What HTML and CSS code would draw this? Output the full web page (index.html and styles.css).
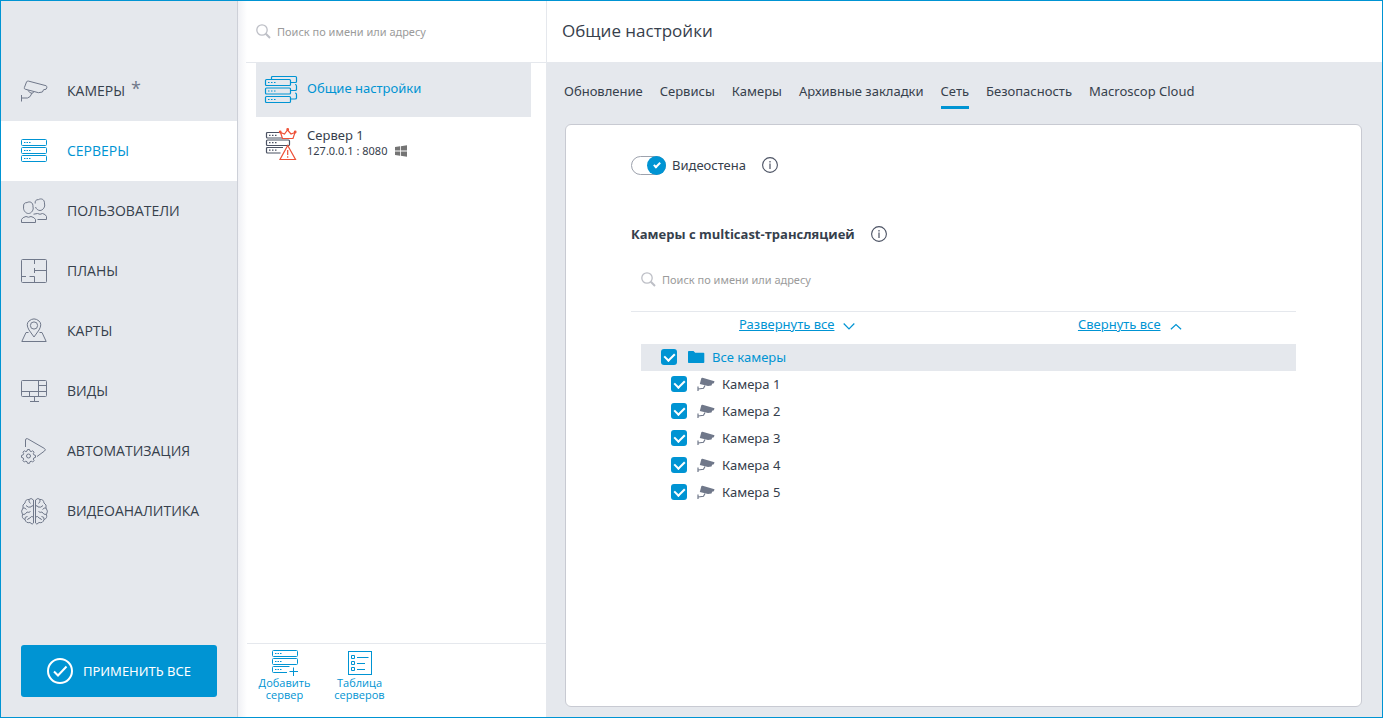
FILE: index.html
```html
<!DOCTYPE html>
<html lang="ru">
<head>
<meta charset="utf-8">
<title>Общие настройки</title>
<link rel="stylesheet" href="styles.css">
</head>
<body>
<svg class="defs" aria-hidden="true">
  <symbol id="search" viewBox="0 0 15 15"><circle cx="6" cy="6" r="5.2" fill="none" stroke="currentColor" stroke-width="1.3"/><path d="M9.8 9.8L14 14" stroke="currentColor" stroke-width="2"/></symbol>
  <symbol id="info" viewBox="0 0 16 16"><circle cx="8" cy="8" r="7.4" fill="none" stroke="currentColor" stroke-width="1.1"/><path d="M8 6.5V12M8 4V5.4" stroke="currentColor" stroke-width="1.2"/></symbol>
  <symbol id="cam" viewBox="0 0 18 14"><path d="M4.300 1.200Q4.600 .6 5.500 .8L17.500 4.200L16.900 6.300L15.100 6.800L14.500 8.600L11 9L2.800 7Z" fill="currentColor"/><path d="M8 8.500L6.500 11.300L1.200 12M1 9.500V14" fill="none" stroke="currentColor" stroke-width="1.2"/></symbol>
</svg>
<div class="window">
  <aside class="sidebar">
    <nav class="nav">
      <a class="nav-item" href="#"><svg class="nav-icon" viewBox="0 0 28 28"><path d="M5.500 5Q6 3.700 7.500 4.100L25 8.700Q26.200 9.200 25.800 10.800L25 12.300L22.600 12.700L21.400 15L17.500 15.700L4.200 12.200Q2.800 11.700 3.400 10.500ZM7 13.300Q8.500 16.300 11 16.300L13 14.800M11 16Q9.500 20.500 6.500 21H.5M.5 18V24.500" /></svg><span>КАМЕРЫ</span><span class="star">*</span></a>
      <a class="nav-item active" href="#"><svg class="nav-icon" viewBox="0 0 28 28"><rect x=".5" y="2.500" width="25" height="6" rx="1"/><rect x=".5" y="10.500" width="25" height="6" rx="1"/><rect x=".5" y="18.500" width="25" height="6" rx="1"/><path d="M3 5.500h1.500m1 0h1.500m1 0h1.500M3 13.500h1.500m1 0h1.500m1 0h1.500M3 21.500h1.500m1 0h1.500m1 0h1.500"/></svg><span>СЕРВЕРЫ</span></a>
      <a class="nav-item" href="#"><svg class="nav-icon" viewBox="0 0 28 28"><path d="M2.600 10C2.200 7 3.500 5.500 6 5.600C8 4.300 12.300 4.500 12 10C13 12.500 10.500 16.500 7.500 16.500S2 13 2.600 10ZM.5 25.500V22.500Q1.500 20.300 5 19.500Q7.500 21 10 19.500Q13.500 20.300 14.500 22.500V25.500ZM14.200 6.500C13.800 4 15 2.500 17.500 2.600C19.500 1.300 23.800 1.500 23.500 7C24.500 9.500 22 13.500 19 13.500C17 13.500 15.300 12 14.500 10M12.500 17.200L16.500 16.500Q19 18 21.500 16.500Q24.700 17.200 25.500 19.500V22.500H16.500"/></svg><span>ПОЛЬЗОВАТЕЛИ</span></a>
      <a class="nav-item" href="#"><svg class="nav-icon" viewBox="0 0 28 28"><rect x=".5" y="2.500" width="25" height="23" rx="1"/><path d="M13.500 2.500V7M13.500 11V16M13.500 13.500H25.500M.5 19.500H5M8.500 19.500H13.500V25.500"/></svg><span>ПЛАНЫ</span></a>
      <a class="nav-item" href="#"><svg class="nav-icon" viewBox="0 0 28 28"><path d="M13 20L8 13Q4.500 7 8 4Q13-.2 18 4Q21.500 7 18 13ZM7.500 15.500H5L.8 24.500H25.200L21 15.500H18.500"/><circle cx="13" cy="8.500" r="3.600"/></svg><span>КАРТЫ</span></a>
      <a class="nav-item" href="#"><svg class="nav-icon" viewBox="0 0 28 28"><rect x=".5" y="3.500" width="25" height="16" rx="1"/><path d="M.5 14.500H25.500M17.500 3.500V19.500M17.500 8.500H25.500M8.500 14.500V19.500M13.500 19.500V24.500M9 24.500H18"/></svg><span>ВИДЫ</span></a>
      <a class="nav-item" href="#"><svg class="nav-icon" viewBox="0 0 28 28"><path d="M4.500 10V3Q4.600 1.200 6.500 1.700L23.500 11.500Q25.200 12.800 23.500 14L16 19.500"/><circle cx="7.500" cy="19" r="2"/><path d="M6.500 12.500h2l.5 1.600 1.200.5 1.500-.8 1.400 1.400-.8 1.500.6 1.200 1.600.5v2l-1.600.5-.6 1.200.8 1.500-1.400 1.400-1.500-.8-1.200.5-.5 1.600h-2l-.5-1.600-1.200-.5-1.500.8-1.400-1.400.8-1.500-.6-1.200-1.600-.5v-2l1.600-.5.6-1.200-.8-1.500 1.400-1.400 1.500.8 1.200-.5z"/></svg><span>АВТОМАТИЗАЦИЯ</span></a>
      <a class="nav-item" href="#"><svg class="nav-icon" viewBox="0 0 28 28"><g id="half"><path d="M12.500 3V26M12.500 3Q10 .2 8 2.500Q4.500 2 4 6Q1 7.500 2 11Q-.6 14 1.500 17.500Q.5 21.500 4 22.500Q5 26.500 9 25.500Q11.500 28.500 12.500 26M8 2.500Q7.500 5 9.500 6.500M12.500 9Q10.500 8 10 10Q7 11 5 8.500M2 11Q4 10.500 5.500 12.500M1.500 17.500Q4.500 18 6 15Q8 16 9.500 14.500M4 22.500Q3.500 19.500 6.500 19.500M12.500 20Q10 18.500 9 21Q6.500 21.500 6.500 23"/></g><use href="#half" transform="matrix(-1 0 0 1 27 0)"/></svg><span>ВИДЕОАНАЛИТИКА</span></a>
    </nav>
    <button class="apply" type="button"><svg class="apply-icon" viewBox="0 0 26 26"><circle cx="13" cy="13" r="12"/><path d="M7 13.500L11 17.500L19.500 8.500"/></svg>ПРИМЕНИТЬ ВСЕ</button>
  </aside>

  <section class="list">
    <label class="search list-search"><svg class="search-icon"><use href="#search"/></svg><input type="text" placeholder="Поиск по имени или адресу" aria-label="Поиск серверов"></label>
    <div class="servers">
      <a class="server selected" href="#">
        <svg class="server-icon" viewBox="0 0 34 32"><path d="M6.500 5V3.500Q6.500 2.500 7.500 2.500H30.500Q31.500 2.500 31.500 3.500V7.500Q31.500 8.500 30.500 8.500H26M30 10.500Q31.500 10.500 31.500 12V15.500Q31.500 16.500 30 16.500H26M30 19Q31.500 19 31.500 20.500V24Q31.500 25 30 25H26"/><rect x=".5" y="5.500" width="25" height="6" rx="1"/><rect x=".5" y="14" width="25" height="6" rx="1"/><rect x=".5" y="22.500" width="25" height="6" rx="1"/><path d="M3 8.500h1.500m1.500 0h1.500m1.500 0h1.500M3 17h1.500m1.500 0h1.500m1.500 0h1.500M3 25.500h1.500m1.500 0h1.500m1.500 0h1.500"/></svg>
        <span class="server-name">Общие настройки</span>
      </a>
      <a class="server" href="#">
        <svg class="server-icon" viewBox="0 0 34 32"><g class="dark"><path d="M15 4.500H2.500Q1.500 4.500 1.500 5.500V9Q1.500 10 2.500 10H17"/><rect x="1.500" y="12" width="23" height="5.500" rx="1"/><path d="M18 19.500H2.500Q1.500 19.500 1.500 20.500V24Q1.500 25 2.500 25H15.500M4 7.300h1.500m1.500 0h1.500m1.500 0h1.500M4 14.700h1.500m1.500 0h1.500m1.500 0h1.500M4 22.200h1.500m1.500 0h1.500m1.500 0h1.500"/></g><g class="red"><path class="fill" d="M17.500 10.500L15.500 4.500L19.500 6L22.500 2L26 6L30 4.500L28 10.500Z"/><circle cx="22.700" cy="1.500" r=".8"/><circle cx="15.200" cy="4" r=".8"/><circle cx="30.200" cy="4" r=".8"/><path class="fill" d="M22.700 17.500L30.500 31.500H15Z"/><path d="M22.700 22V27M22.700 28.200V29.700"/></g></svg>
        <span class="server-text"><span>Сервер 1</span><span class="address">127.0.0.1 : 8080 <svg class="win" viewBox="0 0 12 12"><path d="M0 2L5 1.300V5.600H0ZM5.800 1.200L12 .3V5.600H5.800ZM0 6.400H5V10.700L0 10ZM5.800 6.400H12V11.700L5.800 10.800Z"/></svg></span></span>
      </a>
    </div>
    <footer class="list-footer">
      <button class="tool" type="button"><svg viewBox="0 0 26 26"><rect x=".5" y=".5" width="25" height="6" rx="1"/><rect x=".5" y="8.500" width="25" height="6" rx="1"/><path d="M17.500 16.500H1.500Q.5 16.500 .5 17.500V21.500Q.5 22.500 1.500 22.500H15M17.500 21.500H26M21.500 17.500V26M3 3.500h1.500m1 0h1.500m1 0h1.500M3 11.500h1.500m1 0h1.500m1 0h1.500M3 19.500h1.500m1 0h1.500m1 0h1.500"/></svg>Добавить сервер</button>
      <button class="tool" type="button"><svg viewBox="0 0 26 26"><rect x="1.500" y="1.500" width="23" height="23"/><path d="M4.500 5.500h3v3h-3zM4.500 11.500h3v3h-3zM4.500 17.500h3v3h-3zM10 7.500H21.500M10 13.500H18M10 19.500H18"/></svg>Таблица серверов</button>
    </footer>
  </section>

  <main class="main">
    <header class="title"><h1>Общие настройки</h1></header>
    <nav class="tabs">
      <a class="tab" href="#">Обновление</a><a class="tab" href="#">Сервисы</a><a class="tab" href="#">Камеры</a><a class="tab" href="#">Архивные закладки</a><a class="tab current" href="#">Сеть</a><a class="tab" href="#">Безопасность</a><a class="tab" href="#">Macroscop Cloud</a>
    </nav>
    <section class="card">
      <div class="wall"><label class="switch-label"><input class="switch" type="checkbox" checked>Видеостена</label><svg class="info"><use href="#info"/></svg></div>
      <div class="heading"><h2>Камеры с multicast-трансляцией</h2><svg class="info"><use href="#info"/></svg></div>
      <label class="search cam-search"><svg class="search-icon"><use href="#search"/></svg><input type="text" placeholder="Поиск по имени или адресу" aria-label="Поиск камер"></label>
      <div class="fold">
        <a href="#"><span>Развернуть все</span><svg viewBox="0 0 12 8"><path d="M.7 1.500L6 7L11.300 1.500"/></svg></a>
        <a href="#"><span>Свернуть все</span><svg viewBox="0 0 12 8"><path d="M.9 7.300L6 2.500L11.100 7.300"/></svg></a>
      </div>
      <div class="tree">
        <label class="row root"><input class="tick" type="checkbox" checked><svg class="folder" viewBox="0 0 18 14"><path d="M1 1.500Q1 1 2 1H6.500L8.200 2.700H16.500Q17.300 2.700 17.300 3.500V12.200Q17.300 13 16.500 13H1.800Q1 13 1 12.200Z"/></svg>Все камеры</label>
        <label class="row"><input class="tick" type="checkbox" checked><svg class="cam"><use href="#cam"/></svg>Камера 1</label>
        <label class="row"><input class="tick" type="checkbox" checked><svg class="cam"><use href="#cam"/></svg>Камера 2</label>
        <label class="row"><input class="tick" type="checkbox" checked><svg class="cam"><use href="#cam"/></svg>Камера 3</label>
        <label class="row"><input class="tick" type="checkbox" checked><svg class="cam"><use href="#cam"/></svg>Камера 4</label>
        <label class="row"><input class="tick" type="checkbox" checked><svg class="cam"><use href="#cam"/></svg>Камера 5</label>
      </div>
    </section>
  </main>
</div>
</body>
</html>
```

FILE: styles.css
```css
:root {
  --blue: #0094d3;
  --gray: #e5e8ed;
  --ink: #36404c;
  --icon: #70788a;
}
* { box-sizing: border-box; }
body {
  margin: 0;
  font: 13px/18px "Noto Sans", "Open Sans", sans-serif;
  color: var(--ink);
}
a { color: inherit; text-decoration: none; }
button { font: inherit; border: 0; cursor: pointer; }
svg { flex: none; fill: none; }
.defs { display: none; }

.window {
  display: grid;
  grid-template-columns: 237px 308px 1fr;
  min-height: 100vh;
  border: 1px solid var(--blue);
}

.sidebar {
  display: flex;
  flex-direction: column;
  justify-content: space-between;
  padding: 60px 0 20px;
  background: var(--gray);
  border-right: 1px solid #cdd0d8;
}
.nav { display: flex; flex-direction: column; }
.nav-item {
  display: flex;
  align-items: center;
  height: 60px;
  padding-left: 20px;
  font: 14px/20px "Open Sans", sans-serif;
}
.nav-icon { width: 28px; height: 28px; margin-right: 18px; stroke: var(--icon); }
.active { background: #fff; color: var(--blue); }
.active .nav-icon { stroke: var(--blue); }
.star { margin: 0 0 6px 6px; font-size: 18px; color: var(--icon); }
.apply {
  display: flex;
  align-items: center;
  justify-content: center;
  gap: 10px;
  height: 52px;
  margin: 0 20px;
  border-radius: 3px;
  background: var(--blue);
  color: #fff;
}
.apply-icon { width: 26px; height: 26px; stroke: #fff; stroke-width: 2; }

.list {
  display: flex;
  flex-direction: column;
  background: linear-gradient(to right, #f0f1f5, #fff 9px);
}
.search { display: flex; align-items: center; gap: 6px; }
.search-icon { width: 15px; height: 15px; color: #bdbfc6; }
.search input {
  flex: 1;
  min-width: 0;
  padding: 0;
  border: 0;
  outline: 0;
  background: none;
  font: 11px/16px "Noto Sans", "Open Sans", sans-serif;
}
.search input::placeholder { color: #9b9b9b; opacity: 1; }
.list-search {
  height: 62px;
  margin-left: 8px;
  padding-left: 10px;
  border-bottom: 1px solid var(--gray);
}
.servers { flex: 1; padding: 0 15px 0 18px; }
.server { display: flex; align-items: center; gap: 8px; height: 54px; padding-left: 9px; }
.selected { background: var(--gray); color: var(--blue); }
.server-name { padding-bottom: 4px; }
.server-icon { width: 34px; height: 32px; stroke: var(--blue); stroke-width: 1.2; overflow: visible; }
.dark { stroke: #4b5263; }
.red { stroke: #ee5037; }
.fill { fill: #fff; }
.server-text { display: flex; flex-direction: column; padding-bottom: 2px; line-height: 16px; }
.address { display: flex; align-items: center; gap: 8px; font-size: 11px; }
.win { width: 12px; height: 12px; fill: #747474; }
.list-footer {
  display: flex;
  height: 74px;
  margin-left: 9px;
  padding: 6px 0 0;
  border-top: 1px solid var(--gray);
}
.tool {
  display: flex;
  flex-direction: column;
  align-items: center;
  gap: 1px;
  width: 75px;
  padding: 0;
  background: none;
  color: var(--blue);
  font: 11px/12px "Open Sans", sans-serif;
}
.tool svg { width: 26px; height: 26px; stroke: var(--blue); }

.main { display: flex; flex-direction: column; background: var(--gray); }
.title {
  display: flex;
  align-items: center;
  height: 61px;
  padding: 0 15px 2px;
  background: #fff;
  border-left: 1px solid var(--gray);
}
h1 { margin: 0; font: 17px/24px "Open Sans", sans-serif; }
.tabs { display: flex; gap: 17px; padding: 20px 18px 15px; }
.tab { height: 27px; border-bottom: 3px solid transparent; }
.current { border-color: var(--blue); }
.card {
  flex: 1;
  margin: 0 20px 10px 19px;
  padding: 31px 65px 0;
  border: 1px solid #c8cad2;
  border-radius: 6px;
  background: #fff;
}
.wall, .switch-label, .heading, .row, .fold, .fold a { display: flex; align-items: center; }
.wall { height: 18px; gap: 16px; }
.switch-label { gap: 6px; }
.info { width: 16px; height: 16px; color: #4b5263; }
.switch {
  appearance: none;
  width: 35px;
  height: 19px;
  margin: 0;
  border: 1px solid #9da2ad;
  border-radius: 10px;
  background: #fff;
  position: relative;
}
.switch::before {
  content: "";
  position: absolute;
  top: -1px;
  right: -1px;
  width: 19px;
  height: 19px;
  border-radius: 50%;
  background: var(--blue);
}
.switch::after {
  content: "";
  position: absolute;
  top: 4px;
  right: 6px;
  width: 4px;
  height: 7px;
  border: solid #fff;
  border-width: 0 2px 2px 0;
  box-sizing: content-box;
  width: 2px;
  height: 5px;
  transform: rotate(45deg);
}
.heading { gap: 16px; height: 20px; margin-top: 50px; }
h2 { margin: 0; font: bold 13px/18px "Open Sans", sans-serif; }
.cam-search { height: 68px; padding: 4px 10px 0; border-bottom: 1px solid var(--gray); }
.fold { height: 32px; padding-bottom: 8px; }
.fold a { flex: 1; justify-content: center; gap: 9px; color: var(--blue); }
.fold span { text-decoration: underline; }
.fold svg { width: 12px; height: 8px; margin-top: 4px; stroke: var(--blue); stroke-width: 1.2; }
.tree { margin-left: 10px; }
.row { height: 27px; padding: 0 0 2px 30px; }
.root { padding-left: 20px; background: var(--gray); color: var(--blue); }
.tick {
  appearance: none;
  display: grid;
  place-items: center;
  width: 16px;
  height: 16px;
  margin: 0 10px 0 0;
  border-radius: 3px;
  background: var(--blue);
}
.tick::before {
  content: "";
  width: 5px;
  height: 8px;
  margin-bottom: 2px;
  border: solid #fff;
  border-width: 0 2px 2px 0;
  transform: rotate(45deg);
}
.folder, .cam { width: 18px; height: 14px; margin-right: 7px; }
.folder { fill: var(--blue); }
.cam { color: var(--icon); }
```
